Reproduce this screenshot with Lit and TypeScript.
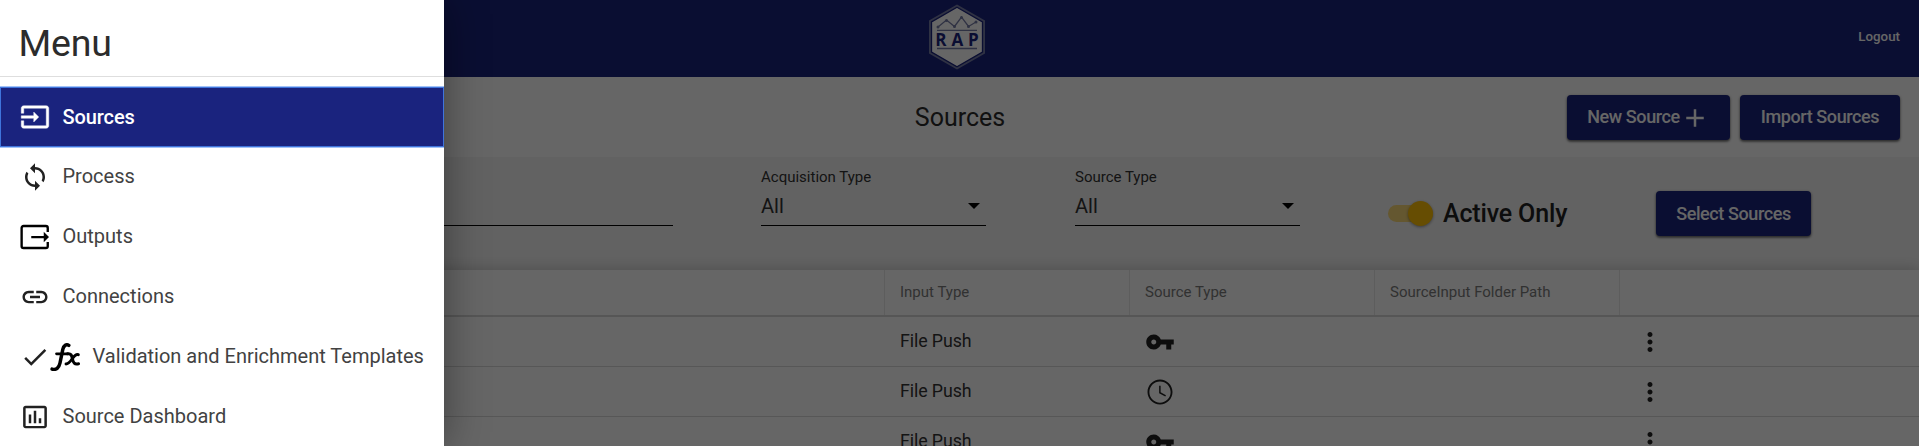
import { LitElement, html, css, svg } from "lit";
import { customElement } from "lit/decorators.js";

const icons = {
  input: svg`<path d="M21 3.010H3c-1.100 0-2 .9-2 2V9h2V4.990h18v14.030H3V15H1v4.010c0 1.100.9 1.980 2 1.980h18c1.100 0 2-.88 2-1.980v-14c0-1.110-.9-2-2-2zM11 16l4-4-4-4v3H1v2h10v3z" stroke="currentColor" stroke-width=".35"/>`,
  sync: svg`<path d="M12 4V1L8 5l4 4V6c3.310 0 6 2.690 6 6 0 1.010-.25 1.970-.7 2.800l1.460 1.460C19.540 15.030 20 13.570 20 12c0-4.420-3.580-8-8-8zm0 14c-3.310 0-6-2.690-6-6 0-1.010.25-1.970.7-2.800L5.240 7.740C4.460 8.970 4 10.430 4 12c0 4.420 3.580 8 8 8v3l4-4-4-4v3z"/>`,
  output: svg`<path d="M22.200 8V4.700a1.500 1.500 0 0 0-1.500-1.500H2.800a1.500 1.500 0 0 0-1.500 1.500v14.600a1.500 1.500 0 0 0 1.500 1.500h17.900a1.500 1.500 0 0 0 1.500-1.500V16" fill="none" stroke="#000" stroke-width="1.900"/><path d="M9 11.100h10V7.800l4.200 4.200-4.200 4.200v-3.300H9z" fill="#000"/>`,
  link: svg`<path d="M3.900 12c0-1.710 1.390-3.100 3.100-3.100h4V7H7c-2.760 0-5 2.240-5 5s2.240 5 5 5h4v-1.900H7c-1.710 0-3.100-1.390-3.100-3.100zM8 13h8v-2H8v2zm9-6h-4v1.900h4c1.710 0 3.100 1.390 3.100 3.100s-1.390 3.100-3.100 3.100h-4V17h4c2.760 0 5-2.240 5-5s-2.240-5-5-5z"/>`,
  check: svg`<path d="M9 16.170L4.830 12l-1.420 1.410L9 19 21 7l-1.410-1.410z"/>`,
  chart: svg`<path d="M9 17H7v-7h2v7zm4 0h-2V7h2v10zm4 0h-2v-4h2v4zm2.500 2.100h-15V5h15v14.100zm0-16.100h-15c-1.100 0-2 .9-2 2v14c0 1.100.9 2 2 2h15c1.100 0 2-.9 2-2V5c0-1.100-.9-2-2-2z"/>`,
  key: svg`<path d="M12.650 10C11.830 7.670 9.610 6 7 6c-3.310 0-6 2.690-6 6s2.690 6 6 6c2.610 0 4.830-1.670 5.650-4H17v4h4v-4h2v-4H12.650zM7 14c-1.100 0-2-.9-2-2s.9-2 2-2 2 .9 2 2-.9 2-2 2z"/>`,
  clock: svg`<path d="M11.990 2C6.470 2 2 6.480 2 12s4.470 10 9.990 10C17.520 22 22 17.520 22 12S17.520 2 11.990 2zM12 20.500c-4.700 0-8.500-3.800-8.500-8.500S7.300 3.500 12 3.500s8.500 3.800 8.500 8.500-3.800 8.500-8.500 8.500zM12.500 7H11.300v5.900l4.900 2.700.6-1-4.300-2.400z"/>`,
  more: svg`<path d="M12 8c1.100 0 2-.9 2-2s-.9-2-2-2-2 .9-2 2 .9 2 2 2zm0 2c-1.100 0-2 .9-2 2s.9 2 2 2 2-.9 2-2-.9-2-2-2zm0 6c-1.100 0-2 .9-2 2s.9 2 2 2 2-.9 2-2-.9-2-2-2z"/>`,
  plus: svg`<path d="M19 13h-6v6h-2v-6H5v-2h6V5h2v6h6v2z"/>`,
};
type IconName = keyof typeof icons;
const icon = (name: IconName, cls = "") =>
  html`<svg class="icon ${cls}" viewBox="0 0 24 24" aria-hidden="true">${icons[name]}</svg>`;

const fx = html`<svg class="fx" viewBox="0 0 30 28" fill="none" stroke="#000" stroke-linecap="round" aria-hidden="true">
  <path d="M18.800 2.400c-2.500-1.600-5 0-6 4L10 20c-1 4.800-3.900 7.300-7.900 6.100" stroke-width="3.500"/>
  <path d="M6.500 10.800h11" stroke-width="2.700"/>
  <path d="M17.500 10.800c3.500-.6 4.200 1.500 5 5.200.7 3.800 2 5.800 6 4.700" stroke-width="3"/>
  <path d="M28.300 11.700c-5-1.700-7 9.300-12.300 9.300" stroke-width="2.900"/>
</svg>`;

const menu: { label: string; icon: IconName; fx?: boolean; active?: boolean }[] = [
  { label: "Sources", icon: "input", active: true },
  { label: "Process", icon: "sync" },
  { label: "Outputs", icon: "output" },
  { label: "Connections", icon: "link" },
  { label: "Validation and Enrichment Templates", icon: "check", fx: true },
  { label: "Source Dashboard", icon: "chart" },
];
const rows: { input: string; type: IconName }[] = [
  { input: "File Push", type: "key" },
  { input: "File Push", type: "clock" },
  { input: "File Push", type: "key" },
];

@customElement("app-root")
export class AppRoot extends LitElement {
  static styles = css`
    :host { display: block; position: relative; height: 446px; overflow: hidden; background: #fff;
      font-family: Roboto, "Liberation Sans", sans-serif; color: #212121; }
    * { box-sizing: border-box; }
    .icon { width: 30px; height: 30px; fill: currentColor; display: block; flex: none; }
    .top { height: 77px; background: #1a237e; display: grid; grid-template-columns: 1fr 60px 1fr; align-items: center; padding: 0 19px 0 13px; }
    .logo { grid-column: 2; width: 60px; height: 68px; display: block; margin-bottom: 4px; }
    .logo text { font: 700 17px "Open Sans", sans-serif; fill: #1a237e; }
    .logout { justify-self: end; color: #fff; font-size: 13.300px; font-weight: 500; line-height: 16px; padding-bottom: 4px; }
    .titlebar { height: 80px; display: grid; grid-template-columns: 1fr auto 1fr; align-items: center; padding: 0 19px; }
    .title { grid-column: 2; font-size: 25px; font-weight: 400; line-height: 32px; margin: 0; padding: 2px 0 0 1px; color: #2c2c2c; }
    .actions { justify-self: end; display: flex; gap: 10px; }
    .btn { height: 45px; border-radius: 4px; background: #1a237e; color: #fff; font-size: 18px; font-weight: 500; letter-spacing: -.4px;
      display: flex; align-items: center; justify-content: center; white-space: nowrap; padding-bottom: 1px; box-shadow: 0 1px 3px rgba(0,0,0,.5), 0 2px 2px rgba(0,0,0,.25); }
    .btn .icon { margin: 2px 0 0 0; }
    .w163 { width: 163px; } .w160 { width: 160px; } .w155 { width: 155px; }
    .filters { height: 113px; background: #f5f5f5; display: flex; align-items: flex-start; }
    .field { border-bottom: 1px solid #000; height: 69px; padding-top: 11px; }
    .search { width: 653px; margin-left: 20px; margin-right: 88px; }
    .select { width: 225px; margin-right: 89px; }
    .select + .select { margin-right: 88px; }
    .label { font-size: 15px; line-height: 18px; color: #333; }
    .value { display: flex; justify-content: space-between; align-items: center; padding: 8px 6px 0 0; font-size: 20px; line-height: 24px; color: #333; }
    .arrow { border: 6px solid transparent; border-top-color: #000; border-bottom: 0; }
    .toggle { display: flex; align-items: center; height: 113px; width: 268px; font-size: 25px; gap: 10px; letter-spacing: -.15px; font-weight: 500; }
    .track { width: 45px; height: 17px; border-radius: 9px; background: #fad978; display: flex; align-items: center; justify-content: flex-end; }
    .thumb { width: 25px; height: 25px; flex: none; border-radius: 50%; background: #ffc107; box-shadow: 0 1px 3px rgba(0,0,0,.4); }
    .slot { padding-top: 34px; }
    .table { position: relative; box-shadow: 0 0 14px rgba(0,0,0,.22); background: #fff; }
    .row { display: grid; grid-template-columns: 885px 245px 245px 245px 1fr; height: 50px; border-bottom: 1px solid #dadada; align-items: center; font-size: 18px; }
    .text { padding-bottom: 2px; font-size: 17.800px; letter-spacing: -.1px; color: #333; }
    .head { height: 47px; border-bottom: 2px solid #d6d6d6; font-size: 15px; color: #7c7c7c; align-items: stretch; }
    .cell { padding-left: 15px; }
    .head .cell { border-right: 1px solid #e8e8e8; display: flex; align-items: center; padding-bottom: 1px; }
    .head .cell:last-child { border-right: 0; }
    .backdrop { position: absolute; inset: 0; background: rgba(0,0,0,.6); }
    .drawer { position: absolute; left: 0; top: 0; bottom: 0; width: 444px; background: #fff; box-shadow: 0 0 40px rgba(0,0,0,.4); }
    .menu-title { height: 77px; border-bottom: 1px solid #dedede; padding: 20px 20px 0 18.500px; font-size: 37.500px; line-height: 46px; font-weight: 400; margin: 0; letter-spacing: -.2px; color: #2c2c2c; }
    .items { padding-top: 10px; }
    .item { height: 60px; display: flex; align-items: center; padding-left: 20px; font-size: 20px; color: #424242; }
    .item span { padding-bottom: 2px; }
    .item.active span { padding-bottom: 1px; }
    .item .icon { margin-right: 12.500px; color: #212121; }
    .item.active { background: #1a237e; color: #fff; font-weight: 500; letter-spacing: -.1px; outline: 1px solid #3f74dc; outline-offset: -1px; box-shadow: 0 -1px #a3c2f7, 0 1px #a3c2f7; }
    .item.active .icon { color: #fff; }
    .item .icon.check { margin-right: 0; }
    .fx { width: 30px; height: 28px; margin-right: 12.500px; }
  `;

  render() {
    return html`
      <header class="top">
        <svg class="logo" viewBox="0 0 60 68">
          <path d="M30 1.500L58 17.500V50.500L30 66.500L2 50.500V17.500Z" fill="#777da8"/>
          <path d="M30 4.300L55.500 19V49L30 63.700L4.500 49V19Z" fill="#fff" stroke="#1a237e" stroke-width="1.300"/>
          <path d="M11 24L19.500 17L27.500 23.500L34.500 14L41.500 23.500L49 19" fill="none" stroke="#777da8" stroke-width="1.300"/>
          <g fill="#777da8"><circle cx="11" cy="24" r="1.500"/><circle cx="19.500" cy="17.500" r="1.500"/><circle cx="27.500" cy="23.500" r="1.500"/><circle cx="34.500" cy="14.500" r="1.500"/><circle cx="41.500" cy="23.500" r="1.500"/><circle cx="49" cy="19" r="1.500"/></g>
          <path d="M10 27.300H50M10 45.500H50" stroke="#777da8" stroke-width="1.300"/>
          <text x="8.300" y="42.500" textLength="43.500">RAP</text>
        </svg>
        <span class="logout">Logout</span>
      </header>
      <section class="titlebar">
        <h1 class="title">Sources</h1>
        <div class="actions">
          <div class="btn w163">New Source ${icon("plus")}</div>
          <div class="btn w160">Import Sources</div>
        </div>
      </section>
      <section class="filters">
        <div class="field search"></div>
        ${["Acquisition Type", "Source Type"].map(
          (l) => html`<div class="field select"><div class="label">${l}</div><div class="value">All<span class="arrow"></span></div></div>`
        )}
        <div class="toggle"><span class="track"><span class="thumb"></span></span>Active Only</div>
        <div class="slot"><div class="btn w155">Select Sources</div></div>
      </section>
      <section class="table">
        <div class="row head">
          ${["", "Input Type", "Source Type", "SourceInput Folder Path", ""].map((h) => html`<div class="cell">${h}</div>`)}
        </div>
        ${rows.map(
          (r) => html`<div class="row"><div class="cell"></div><div class="cell text">${r.input}</div>
            <div class="cell">${icon(r.type)}</div><div class="cell"></div><div class="cell">${icon("more")}</div></div>`
        )}
      </section>
      <div class="backdrop"></div>
      <nav class="drawer">
        <h2 class="menu-title">Menu</h2>
        <div class="items">
          ${menu.map(
            (m) => html`<div class="item ${m.active ? "active" : ""}">${icon(m.icon, m.icon)}${m.fx ? fx : ""}<span>${m.label}</span></div>`
          )}
        </div>
      </nav>
    `;
  }
}
